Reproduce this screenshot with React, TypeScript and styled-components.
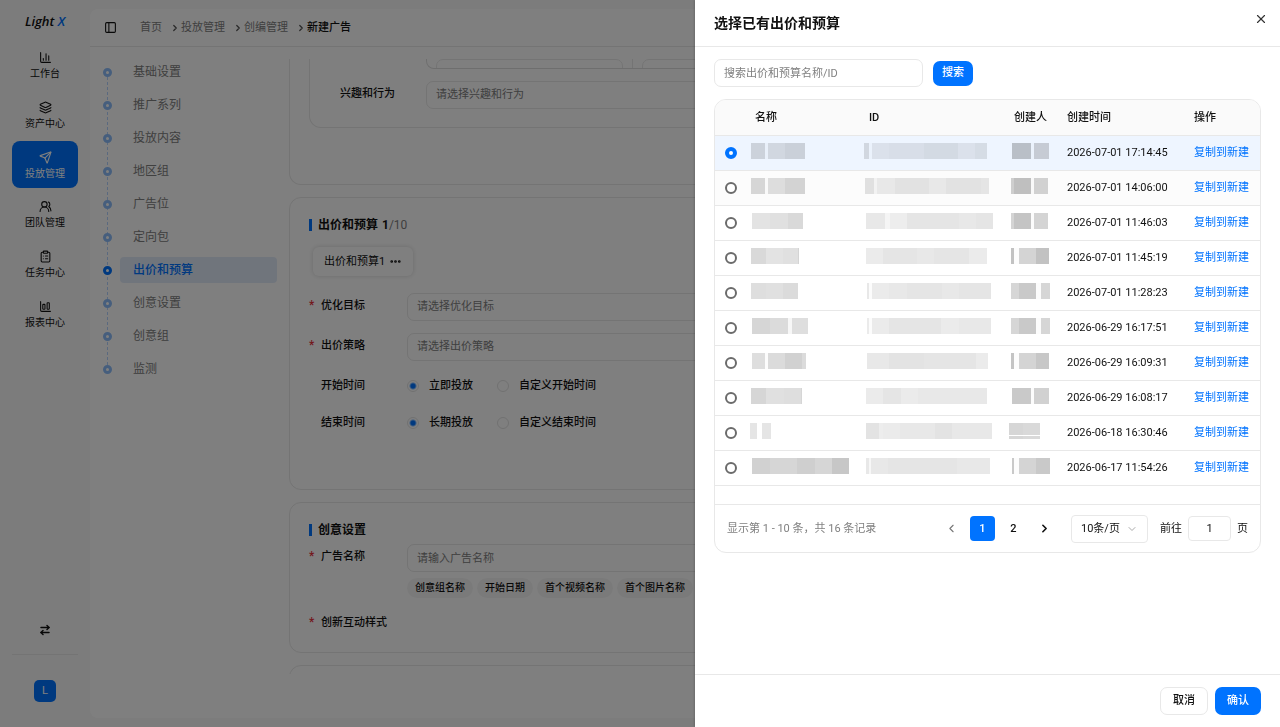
import React, { useState } from 'react';
import styled, { createGlobalStyle } from 'styled-components';
import {
  ArrowRightLeft,
  ChartColumn,
  ChartColumnBig,
  ChevronDown,
  ChevronLeft,
  ChevronRight,
  ClipboardList,
  Ellipsis,
  Layers,
  PanelLeft,
  Send,
  UsersRound,
  X,
} from 'lucide-react';

const blue = '#0073ff';
const line = '#e8e8e8';

const GlobalStyle = createGlobalStyle`
  *, *::before, *::after { box-sizing: border-box; }
  body {
    margin: 0;
    color: #111;
    background: #fff;
    font: 11px/16px Roboto, "Noto Sans CJK SC", sans-serif;
  }
  button, input, select { font: inherit; color: inherit; margin: 0; }
  button { cursor: pointer; padding: 0; border: 0; background: none; }
  ol, ul { list-style: none; margin: 0; padding: 0; }
  a { text-decoration: none; color: inherit; }
  h1, h2, p { margin: 0; }
`;

/* ---------- application shell ---------- */

const Shell = styled.div`
  display: flex;
  height: 100vh;
  overflow: hidden;
  background: #f8f8f8;
`;

const Sidebar = styled.aside`
  display: flex;
  flex-direction: column;
  flex: 0 0 90px;
  padding: 12px 12px 25px;
`;

const Logo = styled.div`
  margin-bottom: 12px;
  text-align: center;
  font: italic 600 13px/18px "Open Sans", "Noto Sans", sans-serif;
  span { color: ${blue}; }
`;

const SideNav = styled.nav`
  display: grid;
  grid-auto-rows: 1fr;
  gap: 3px;
  height: 295px;
`;

const SideLink = styled.a<{ $active?: boolean }>`
  display: flex;
  flex-direction: column;
  align-items: center;
  justify-content: center;
  gap: 2px;
  padding-top: 2px;
  border-radius: 8px;
  font-size: 10px;
  line-height: 15px;
  color: ${(p) => (p.$active ? '#fff' : '#111')};
  background: ${(p) => (p.$active ? blue : 'transparent')};
`;

const SideBottom = styled.div`
  display: flex;
  flex-direction: column;
  align-items: center;
  margin-top: auto;
`;

const SwitchButton = styled.button`
  display: flex;
  padding-bottom: 18px;
`;

const SideDivider = styled.hr`
  width: 100%;
  height: 1px;
  margin: 0 0 25px;
  border: 0;
  background: ${line};
`;

const Avatar = styled.button`
  width: 22px;
  height: 22px;
  border-radius: 5px;
  color: #fff;
  background: ${blue};
`;

const Main = styled.main`
  display: flex;
  flex: 1;
  flex-direction: column;
  min-width: 0;
  margin: 9px 0;
  border-radius: 8px;
  background: #fff;
`;

const TopBar = styled.header`
  display: flex;
  flex: none;
  align-items: center;
  height: 38px;
  padding-left: 14px;
  border-bottom: 1px solid ${line};
`;

const PanelToggle = styled.button`
  display: flex;
  margin-right: 23px;
`;

const Crumbs = styled.ol`
  display: flex;
  gap: 8px;
`;

const Crumb = styled.li<{ $current?: boolean }>`
  display: flex;
  align-items: center;
  gap: 1px;
  font-weight: ${(p) => (p.$current ? 500 : 400)};
  color: ${(p) => (p.$current ? '#111' : '#808080')};
  svg { color: #555; }
`;

const Body = styled.div`
  display: flex;
  flex: 1;
  gap: 12px;
  min-height: 0;
  padding: 12px 19px 44px 13px;
`;

const Steps = styled.ol`
  display: flex;
  flex: 0 0 174px;
  flex-direction: column;
  gap: 7px;
  align-self: flex-start;
  background: repeating-linear-gradient(#b4d3ff 0 3px, transparent 3px 5px) 4px 13px / 1px calc(100% - 26px) no-repeat;
`;

const StepItem = styled.li`
  display: flex;
  align-items: center;
  gap: 8px;
`;

const StepDot = styled.span<{ $active?: boolean }>`
  flex: none;
  width: 9px;
  height: 9px;
  border: 3px solid ${(p) => (p.$active ? blue : '#8dbdfa')};
  border-radius: 50%;
  background: #fff;
`;

const StepLink = styled.a<{ $active?: boolean }>`
  flex: 1;
  padding-left: 13px;
  border-radius: 4px;
  font-size: 12px;
  line-height: 26px;
  font-weight: ${(p) => (p.$active ? 500 : 400)};
  color: ${(p) => (p.$active ? blue : '#808080')};
  background: ${(p) => (p.$active ? '#e1ebf9' : 'transparent')};
`;

const FormScroll = styled.div`
  display: flex;
  flex: 1;
  flex-direction: column;
  gap: 12px;
  min-width: 0;
  overflow: hidden;
`;

const Card = styled.section<{ $continued?: boolean; $spare?: number }>`
  flex: none;
  padding: ${(p) => (p.$continued ? 0 : 17)}px 19px ${(p) => 17 + (p.$spare || 0)}px;
  border: 1px solid ${line};
  border-top-width: ${(p) => (p.$continued ? 0 : 1)}px;
  border-radius: ${(p) => (p.$continued ? '0 0 12px 12px' : '12px')};
`;

const SubCard = styled.div`
  padding: 0 0 18px 30px;
  border: 1px solid ${line};
  border-top: 0;
  border-radius: 0 0 12px 12px;
`;

const RangeGroup = styled.div`
  display: grid;
  grid-template-columns: 206px 1fr;
  align-items: end;
  height: 10px;
  margin: 0 0 12px 86px;
  overflow: hidden;
  border: 1px solid #ddd;
  border-top: 0;
  border-radius: 0 0 8px 8px;
`;

const RangeCell = styled.div`
  padding: 0 9px 8px;
  border-right: 1px solid ${line};
`;

const CardTitle = styled.h2`
  display: flex;
  align-items: center;
  height: 20px;
  margin-bottom: 4px;
  font-size: 12px;
  font-weight: 700;
  &::before {
    content: '';
    width: 3px;
    height: 12px;
    margin-right: 6px;
    background: ${blue};
  }
`;

const Count = styled.span`
  margin-left: 4px;
  small {
    font-size: 12px;
    font-weight: 400;
    color: #808080;
  }
`;

const PlanTab = styled.button`
  display: flex;
  align-items: center;
  gap: 4px;
  height: 29px;
  margin: 12px 4px 17px;
  padding: 0 11px;
  border-radius: 6px;
  background: #fff;
  box-shadow: 0 0 5px rgba(0, 0, 0, 0.16);
`;

const Fields = styled.div`
  display: flex;
  flex-direction: column;
  gap: 12px;
`;

const Field = styled.div`
  display: flex;
  align-items: flex-start;
`;

const FieldLabel = styled.label<{ $required?: boolean; $width: number }>`
  flex: 0 0 ${(p) => p.$width}px;
  display: flex;
  line-height: 25px;
  font-weight: 500;
  &::before {
    content: '${(p) => (p.$required ? '*' : '')}';
    display: ${(p) => (p.$required === undefined ? 'none' : 'block')};
    width: 12px;
    color: #e8303a;
    font-size: 12px;
    line-height: 24px;
  }
`;

const FieldBody = styled.div`
  display: flex;
  flex: 1;
  flex-direction: column;
  gap: 6px;
  min-width: 0;
`;

const TextBox = styled.input`
  width: 100%;
  height: 28px;
  padding: 0 9px;
  border: 1px solid ${line};
  border-radius: 7px;
  background: #fff;
  outline: 0;
  &::placeholder { color: #808080; opacity: 1; }
`;

const PickBox = styled.select`
  width: 100%;
  height: 28px;
  padding: 0 9px;
  border: 1px solid ${line};
  border-radius: 7px;
  appearance: none;
  color: #808080;
  background: #fff;
`;

const Choices = styled.div`
  display: flex;
  gap: 24px;
`;

const Choice = styled.label`
  display: flex;
  align-items: center;
  gap: 10px;
  height: 25px;
  font-weight: 500;
`;

const SoftRadio = styled.input`
  appearance: none;
  width: 12px;
  height: 12px;
  border: 1px solid #e2e2e2;
  border-radius: 50%;
  &:checked { background: radial-gradient(circle, ${blue} 2px, transparent 4px); }
`;

const Tags = styled.div`
  display: flex;
  gap: 4px;
`;

const Tag = styled.button`
  flex: none;
  height: 20px;
  padding: 0 8px;
  border-radius: 10px;
  font-size: 10px;
  font-weight: 500;
  background: #f5f5f5;
`;

/* ---------- drawer ---------- */

const Mask = styled.div`
  position: fixed;
  inset: 0;
  background: rgba(0, 0, 0, 0.5);
`;

const Drawer = styled.section`
  position: fixed;
  inset: 0 0 0 auto;
  display: flex;
  flex-direction: column;
  width: min(585px, 100vw);
  background: #fff;
  box-shadow: -1px 0 2px rgba(0, 0, 0, 0.16);
`;

const DrawerHead = styled.header`
  display: flex;
  align-items: center;
  justify-content: space-between;
  height: 47px;
  padding: 0 12px 0 19px;
  border-bottom: 1px solid ${line};
`;

const DrawerTitle = styled.h1`
  font-size: 14px;
  line-height: 20px;
  font-weight: 700;
`;

const CloseButton = styled.button`
  display: flex;
  margin-bottom: 9px;
  color: #333;
`;

const DrawerBody = styled.div`
  flex: 1;
  padding: 12px 19px;
`;

const SearchRow = styled.form`
  display: flex;
  align-items: center;
  gap: 10px;
  margin-bottom: 12px;
`;

const SearchBox = styled(TextBox)`
  width: 209px;
`;

const Button = styled.button<{ $kind: 'primary' | 'plain'; $tall?: boolean }>`
  height: ${(p) => (p.$tall ? 28 : 25)}px;
  padding: 0 ${(p) => (p.$tall ? 12 : 9)}px;
  border-radius: 7px;
  font-weight: 500;
  color: ${(p) => (p.$kind === 'primary' ? '#fff' : '#111')};
  background: ${(p) => (p.$kind === 'primary' ? blue : '#fff')};
  border: ${(p) => (p.$kind === 'plain' ? `1px solid ${line}` : '0')};
`;

const TableCard = styled.div`
  overflow: hidden;
  border: 1px solid ${line};
  border-radius: 12px;
`;

const Table = styled.table`
  width: 100%;
  table-layout: fixed;
  border-collapse: separate;
  border-spacing: 0;
`;

const Col = styled.col<{ $width?: number }>`
  width: ${(p) => (p.$width ? `${p.$width}px` : 'auto')};
`;

const Th = styled.th<{ $inset?: boolean }>`
  height: 36px;
  padding: 0 0 0 ${(p) => (p.$inset ? 15 : 10)}px;
  border-bottom: 1px solid ${line};
  text-align: left;
  font-weight: 500;
  background: #fafafa;
`;

const Tr = styled.tr<{ $tone?: string }>`
  background: ${(p) => p.$tone || '#fff'};
`;

const Td = styled.td`
  height: 35px;
  padding: 0 0 0 10px;
  border-bottom: 1px solid ${line};
  white-space: nowrap;
`;

const RowRadio = styled.input`
  display: block;
  appearance: none;
  width: 12px;
  height: 12px;
  border: 2px solid #6b6b6b;
  border-radius: 50%;
  background: #fff;
  &:checked { border: 4px solid ${blue}; }
`;

const CopyLink = styled.a`
  color: ${blue};
`;

const Redacted = styled.span`
  display: flex;
  padding-bottom: 4px;
`;

const Block = styled.span<{ $w: number; $ink: string; $split?: boolean }>`
  width: ${(p) => p.$w}px;
  height: 16px;
  background: ${(p) =>
    p.$split
      ? `linear-gradient(${p.$ink} 0 12px, transparent 12px 13px, ${p.$ink} 13px)`
      : p.$ink};
`;

const TableEnd = styled.div`
  height: 19px;
  border-bottom: 1px solid ${line};
`;

const Pager = styled.footer`
  display: flex;
  align-items: center;
  gap: 6px;
  height: 47px;
  padding: 0 12px;
`;

const Total = styled.p`
  margin-right: auto;
  color: #808080;
`;

const PageButton = styled.button<{ $active?: boolean }>`
  display: flex;
  align-items: center;
  justify-content: center;
  width: 25px;
  height: 25px;
  border-radius: 4px;
  font-weight: 500;
  color: ${(p) => (p.$active ? '#fff' : '#111')};
  background: ${(p) => (p.$active ? blue : 'transparent')};
  &:disabled { color: #777; }
`;

const SizePicker = styled.label`
  display: grid;
  align-items: center;
  margin: 0 6px 0 8px;
  > * { grid-area: 1 / 1; }
  svg { justify-self: end; margin-right: 10px; color: #aaa; pointer-events: none; }
`;

const SizeSelect = styled.select`
  width: 77px;
  height: 28px;
  padding: 0 9px;
  border: 1px solid ${line};
  border-radius: 4px;
  appearance: none;
  background: #fff;
`;

const Jump = styled.label`
  display: flex;
  align-items: center;
  gap: 6px;
`;

const JumpBox = styled.input`
  width: 43px;
  height: 25px;
  border: 1px solid ${line};
  border-radius: 4px;
  text-align: center;
`;

const DrawerFoot = styled.footer`
  display: flex;
  justify-content: flex-end;
  gap: 7px;
  padding: 12px 19px;
  border-top: 1px solid ${line};
`;

/* ---------- data ---------- */

const navItems = [
  { text: '工作台', Icon: ChartColumn },
  { text: '资产中心', Icon: Layers },
  { text: '投放管理', Icon: Send },
  { text: '团队管理', Icon: UsersRound },
  { text: '任务中心', Icon: ClipboardList },
  { text: '报表中心', Icon: ChartColumnBig },
];

const crumbs = ['首页', '投放管理', '创编管理', '新建广告'];

const steps = ['基础设置', '推广系列', '投放内容', '地区组', '广告位', '定向包', '出价和预算', '创意设置', '创意组', '监测'];

// Each block of a redacted value is [width, darkness in percent].
type Blocks = [number, number][];

const rows: { time: string; name: Blocks; id: Blocks; owner: Blocks; split?: boolean }[] = [
  {
    time: '2026-07-01 17:14:45',
    name: [[1, 0], [14, 14], [3, 2], [17, 12], [20, 15]],
    id: [[5, 12], [3, 1], [17, 8], [35, 9], [34, 11], [17, 8], [12, 10]],
    owner: [[3, 0], [19, 22], [3, 1], [15, 17]],
  },
  {
    time: '2026-07-01 14:06:00',
    name: [[1, 0], [14, 15], [3, 1], [17, 12], [20, 16]],
    id: [[1, 0], [9, 11], [3, 4], [18, 8], [34, 10], [17, 8], [35, 10], [8, 9]],
    owner: [[2, 0], [3, 18], [17, 24], [3, 1], [14, 17]],
  },
  {
    time: '2026-07-01 11:46:03',
    name: [[2, 0], [18, 11], [18, 12], [15, 15]],
    id: [[2, 0], [19, 9], [5, 4], [17, 7], [52, 10], [17, 9], [17, 10]],
    owner: [[2, 0], [3, 17], [17, 23], [3, 1], [14, 17]],
  },
  {
    time: '2026-07-01 11:45:19',
    name: [[1, 0], [15, 15], [17, 11], [15, 12], [1, 17]],
    id: [[2, 0], [17, 8], [34, 10], [17, 9], [35, 10], [18, 8]],
    owner: [[2, 0], [3, 24], [5, 1], [17, 17], [13, 24]],
  },
  {
    time: '2026-07-01 11:28:23',
    name: [[1, 0], [15, 13], [17, 12], [15, 14]],
    id: [[3, 0], [2, 9], [3, 1], [17, 8], [18, 9], [35, 10], [17, 9], [32, 10]],
    owner: [[2, 0], [8, 16], [17, 21], [5, 1], [9, 16]],
  },
  {
    time: '2026-06-29 16:17:51',
    name: [[2, 0], [18, 16], [18, 14], [4, 3], [16, 13]],
    id: [[3, 0], [2, 8], [3, 1], [17, 8], [52, 10], [18, 8], [32, 9]],
    owner: [[2, 0], [8, 16], [17, 21], [5, 1], [9, 16]],
  },
  {
    time: '2026-06-29 16:09:31',
    name: [[2, 0], [13, 13], [3, 1], [17, 14], [17, 18], [4, 14]],
    id: [[3, 0], [22, 9], [35, 11], [17, 10], [35, 10], [12, 8]],
    owner: [[2, 0], [3, 23], [5, 1], [17, 17], [13, 22]],
  },
  {
    time: '2026-06-29 16:08:17',
    name: [[1, 0], [15, 16], [18, 12], [17, 13], [1, 16]],
    id: [[2, 0], [17, 8], [18, 10], [17, 8], [17, 9], [52, 9]],
    owner: [[3, 0], [19, 21], [3, 1], [15, 18]],
  },
  {
    time: '2026-06-18 16:30:46',
    name: [[7, 10], [5, 0], [9, 10]],
    id: [[2, 0], [13, 11], [4, 7], [17, 8], [35, 9], [17, 11], [40, 9]],
    owner: [[14, 16], [17, 15]],
    split: true,
  },
  {
    time: '2026-06-17 11:54:26',
    name: [[2, 0], [18, 18], [27, 16], [18, 19], [17, 16], [17, 22]],
    id: [[2, 0], [3, 9], [2, 3], [17, 9], [52, 10], [17, 10], [33, 9]],
    owner: [[3, 0], [2, 21], [5, 1], [17, 17], [14, 21]],
  },
];

const tones = ['#eef5ff', '#fcfcfc'];

function Mosaic({ blocks, split }: { blocks: Blocks; split?: boolean }) {
  return (
    <Redacted aria-hidden="true">
      {blocks.map(([w, shade], i) => (
        <Block key={i} $w={w} $ink={`rgba(0, 0, 0, ${shade / 100})`} $split={split} />
      ))}
    </Redacted>
  );
}

function RadioField({ label, name, options }: { label: string; name: string; options: string[] }) {
  return (
    <Field role="radiogroup" aria-label={label}>
      <FieldLabel as="span" $required={false} $width={98}>{label}</FieldLabel>
      <Choices>
        {options.map((text, i) => (
          <Choice key={text}>
            <SoftRadio type="radio" name={name} defaultChecked={i === 0} />
            {text}
          </Choice>
        ))}
      </Choices>
    </Field>
  );
}

function SelectField({ id, label, hint }: { id: string; label: string; hint: string }) {
  return (
    <Field>
      <FieldLabel htmlFor={id} $required $width={98}>{label}</FieldLabel>
      <FieldBody>
        <PickBox id={id}><option>{hint}</option></PickBox>
      </FieldBody>
    </Field>
  );
}

function SelectionDrawer() {
  const [picked, setPicked] = useState(0);
  return (
    <Drawer role="dialog" aria-labelledby="drawer-title">
      <DrawerHead>
        <DrawerTitle id="drawer-title">选择已有出价和预算</DrawerTitle>
        <CloseButton aria-label="关闭"><X size={14} /></CloseButton>
      </DrawerHead>
      <DrawerBody>
        <SearchRow onSubmit={(e) => e.preventDefault()}>
          <SearchBox aria-label="搜索" placeholder="搜索出价和预算名称/ID" />
          <Button $kind="primary">搜索</Button>
        </SearchRow>
        <TableCard>
          <Table>
            <colgroup>
              <Col $width={25} />
              <Col $width={114} />
              <Col />
              <Col $width={58} />
              <Col $width={127} />
              <Col $width={76} />
            </colgroup>
            <thead>
              <tr>
                <Th aria-label="选择" />
                <Th $inset>名称</Th>
                <Th $inset>ID</Th>
                <Th $inset>创建人</Th>
                <Th>创建时间</Th>
                <Th>操作</Th>
              </tr>
            </thead>
            <tbody>
              {rows.map((row, i) => (
                <Tr key={row.time} $tone={tones[i]}>
                  <Td>
                    <RowRadio
                      type="radio"
                      name="plan"
                      aria-label={row.time}
                      checked={picked === i}
                      onChange={() => setPicked(i)}
                    />
                  </Td>
                  <Td><Mosaic blocks={row.name} /></Td>
                  <Td><Mosaic blocks={row.id} /></Td>
                  <Td><Mosaic blocks={row.owner} split={row.split} /></Td>
                  <Td>{row.time}</Td>
                  <Td><CopyLink href="#copy">复制到新建</CopyLink></Td>
                </Tr>
              ))}
            </tbody>
          </Table>
          <TableEnd />
          <Pager>
            <Total>显示第 1 - 10 条，共 16 条记录</Total>
            <PageButton disabled aria-label="上一页"><ChevronLeft size={13} /></PageButton>
            <PageButton $active>1</PageButton>
            <PageButton>2</PageButton>
            <PageButton aria-label="下一页"><ChevronRight size={13} strokeWidth={3} /></PageButton>
            <SizePicker>
              <SizeSelect aria-label="每页条数"><option>10条/页</option></SizeSelect>
              <ChevronDown size={12} />
            </SizePicker>
            <Jump>
              前往
              <JumpBox defaultValue="1" />
              页
            </Jump>
          </Pager>
        </TableCard>
      </DrawerBody>
      <DrawerFoot>
        <Button $kind="plain" $tall>取消</Button>
        <Button $kind="primary" $tall>确认</Button>
      </DrawerFoot>
    </Drawer>
  );
}

export default function App() {
  return (
    <>
      <GlobalStyle />
      <Shell>
        <Sidebar>
          <Logo>Light <span>X</span></Logo>
          <SideNav>
            {navItems.map(({ text, Icon }, i) => (
              <SideLink key={text} href="#nav" $active={i === 2}>
                <Icon size={13} />
                {text}
              </SideLink>
            ))}
          </SideNav>
          <SideBottom>
            <SwitchButton aria-label="切换"><ArrowRightLeft size={12} strokeWidth={3} /></SwitchButton>
            <SideDivider />
            <Avatar>L</Avatar>
          </SideBottom>
        </Sidebar>
        <Main>
          <TopBar>
            <PanelToggle aria-label="收起侧栏"><PanelLeft size={13} /></PanelToggle>
            <Crumbs>
              {crumbs.map((text, i) => (
                <Crumb key={text} $current={i === crumbs.length - 1}>
                  {i > 0 && <ChevronRight size={10} strokeWidth={3} />}
                  {text}
                </Crumb>
              ))}
            </Crumbs>
          </TopBar>
          <Body>
            <Steps>
              {steps.map((text, i) => (
                <StepItem key={text}>
                  <StepDot $active={i === 6} />
                  <StepLink href="#step" $active={i === 6}>{text}</StepLink>
                </StepItem>
              ))}
            </Steps>
            <FormScroll>
              <Card $continued $spare={39}>
                <SubCard>
                  <RangeGroup>
                    <RangeCell><TextBox aria-label="最小值" /></RangeCell>
                    <RangeCell><TextBox aria-label="最大值" /></RangeCell>
                  </RangeGroup>
                  <Field>
                    <FieldLabel htmlFor="interest" $width={86}>兴趣和行为</FieldLabel>
                    <FieldBody>
                      <PickBox id="interest"><option>请选择兴趣和行为</option></PickBox>
                    </FieldBody>
                  </Field>
                </SubCard>
              </Card>
              <Card $spare={37}>
                <CardTitle>
                  出价和预算
                  <Count>1<small>/10</small></Count>
                </CardTitle>
                <PlanTab>出价和预算1 <Ellipsis size={13} strokeWidth={3} /></PlanTab>
                <Fields>
                  <SelectField id="goal" label="优化目标" hint="请选择优化目标" />
                  <SelectField id="bid" label="出价策略" hint="请选择出价策略" />
                  <RadioField label="开始时间" name="start" options={['立即投放', '自定义开始时间']} />
                  <RadioField label="结束时间" name="end" options={['长期投放', '自定义结束时间']} />
                </Fields>
              </Card>
              <Card>
                <CardTitle>创意设置</CardTitle>
                <Fields>
                  <Field>
                    <FieldLabel htmlFor="ad-name" $required $width={98}>广告名称</FieldLabel>
                    <FieldBody>
                      <TextBox id="ad-name" placeholder="请输入广告名称" />
                      <Tags>
                        {['创意组名称', '开始日期', '首个视频名称', '首个图片名称'].map((text) => (
                          <Tag key={text}>{text}</Tag>
                        ))}
                      </Tags>
                    </FieldBody>
                  </Field>
                  <Field>
                    <FieldLabel as="span" $required $width={98}>创新互动样式</FieldLabel>
                  </Field>
                </Fields>
              </Card>
              <Card $spare={37} />
            </FormScroll>
          </Body>
        </Main>
      </Shell>
      <Mask />
      <SelectionDrawer />
    </>
  );
}
